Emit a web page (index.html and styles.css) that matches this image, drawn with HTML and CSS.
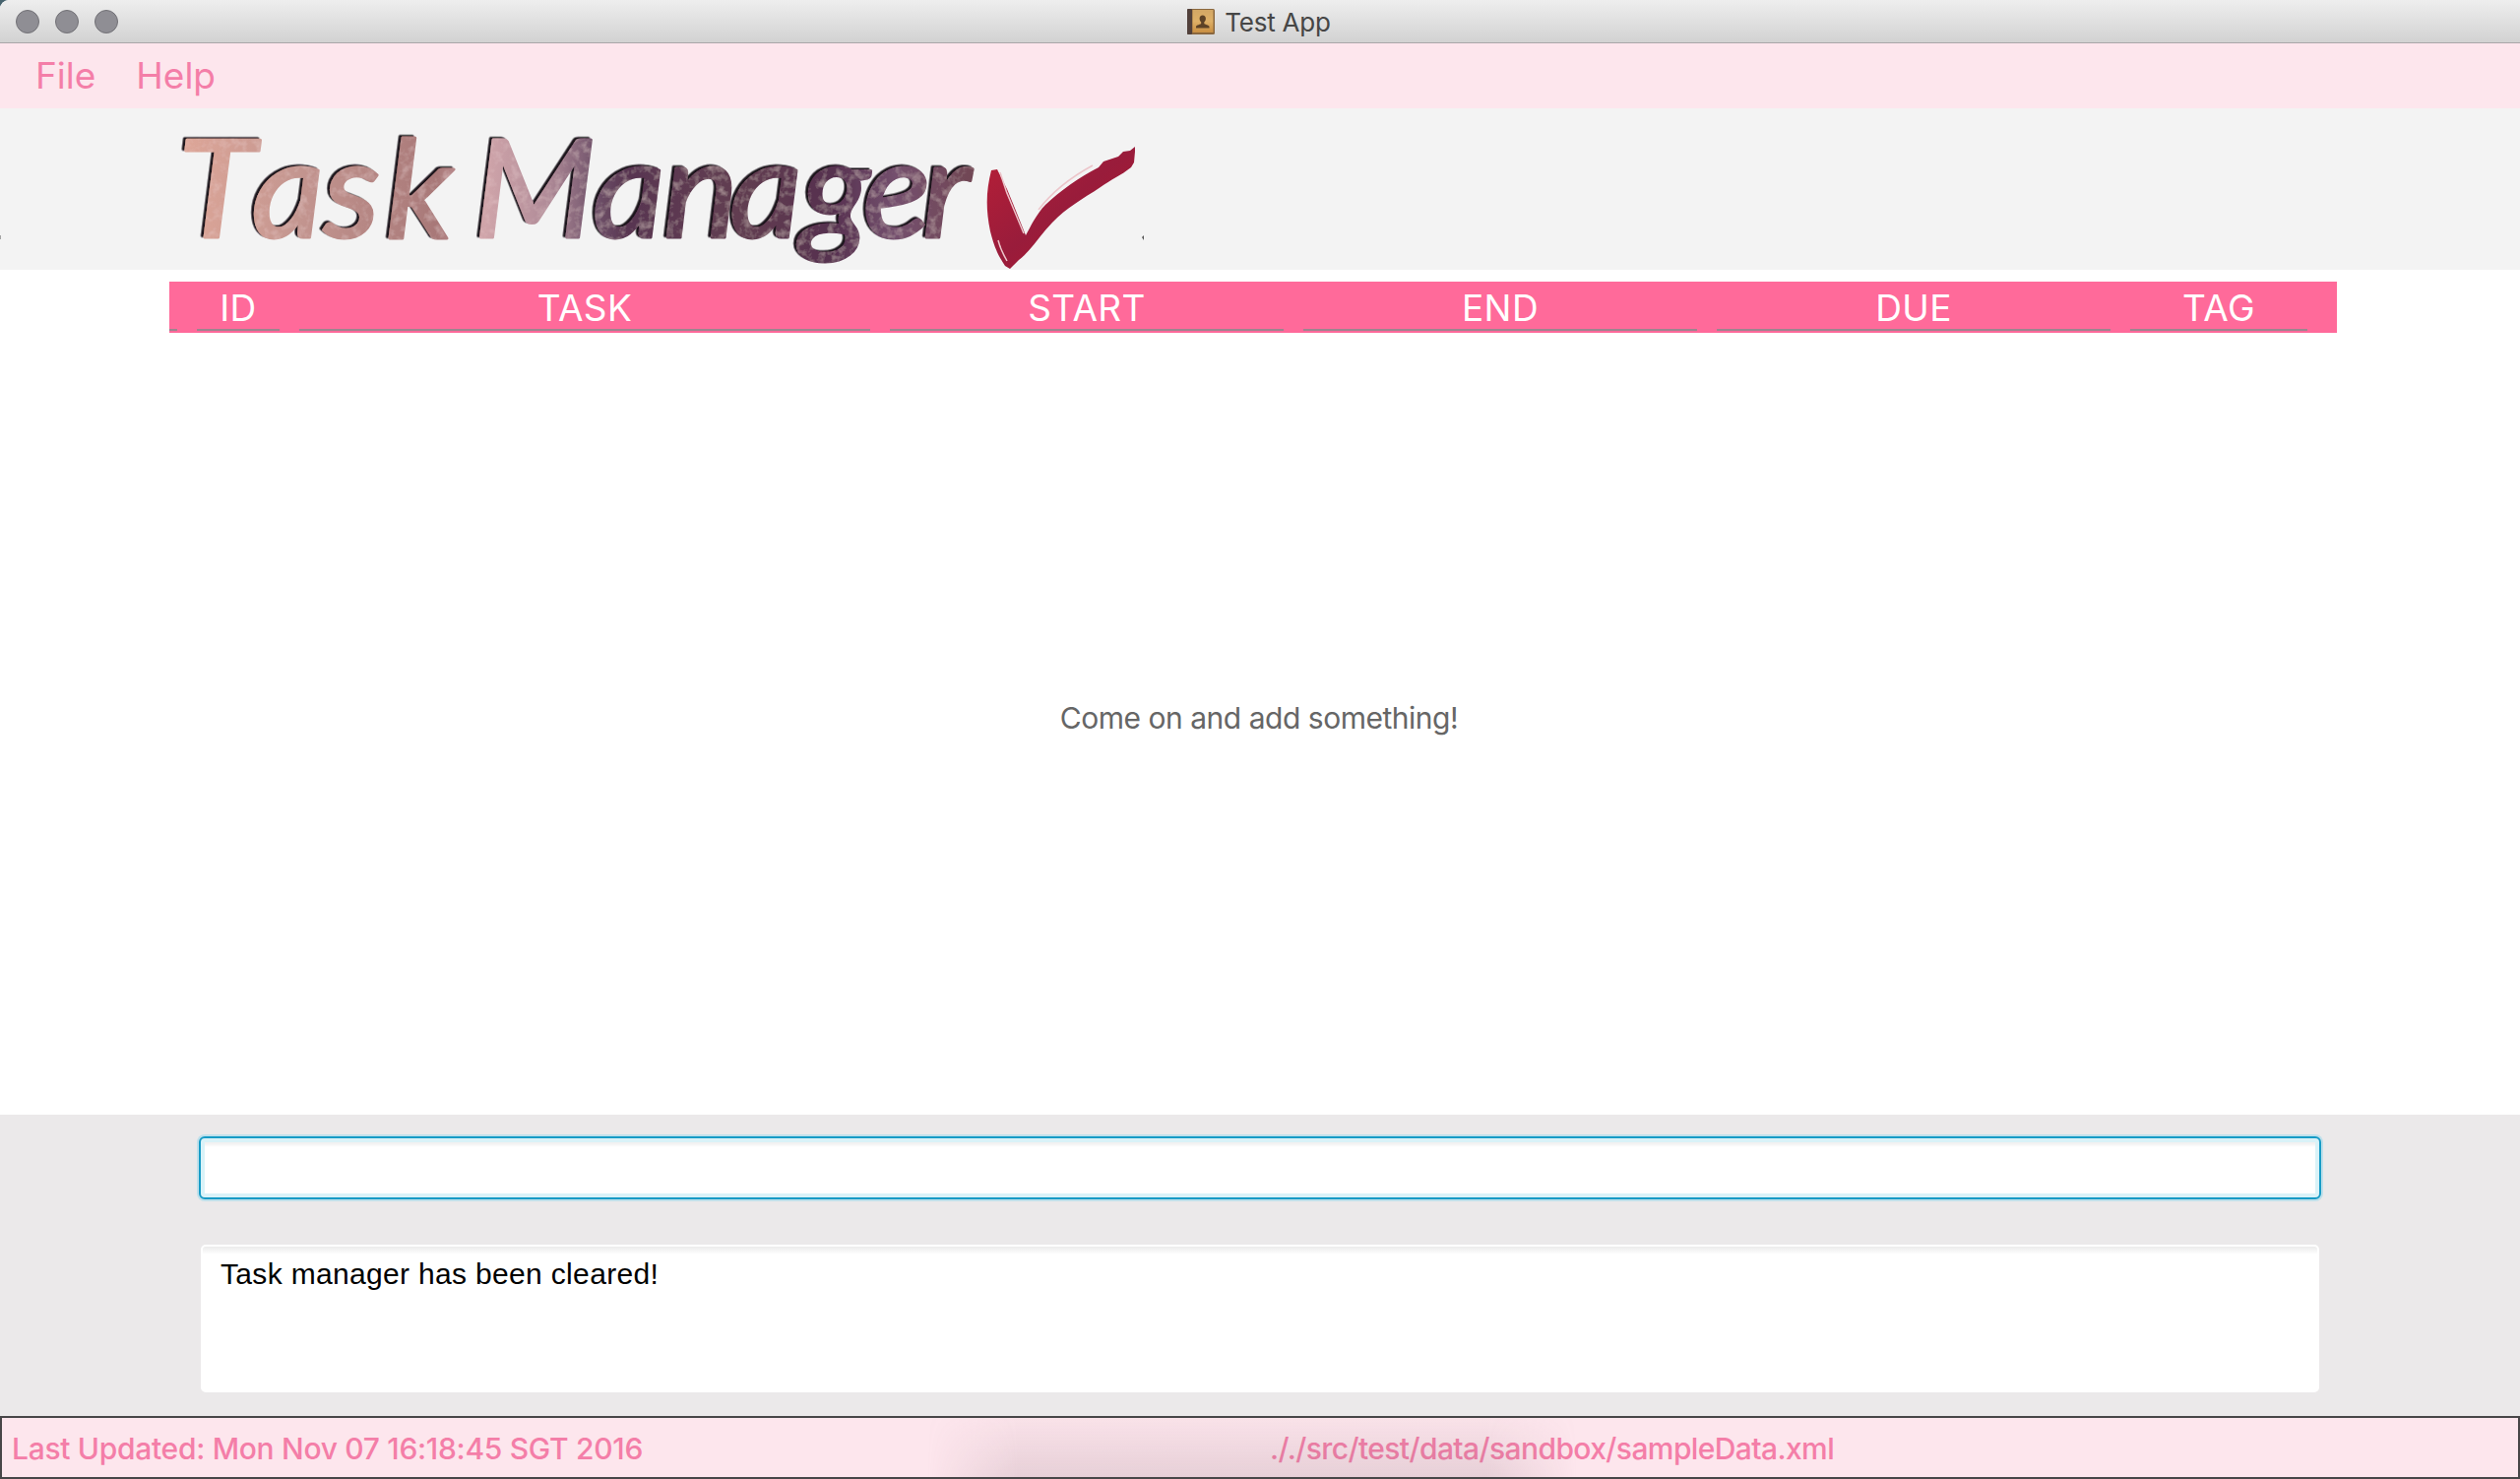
FILE: index.html
```html
<!DOCTYPE html>
<html lang="en">
<head>
<meta charset="utf-8">
<title>Test App</title>
<link rel="stylesheet" href="styles.css">
</head>
<body>
<div class="window">
  <header class="titlebar">
    <div class="lights"><i></i><i></i><i></i></div>
    <div class="title">
      <svg class="book" width="28" height="26" viewBox="0 0 28 26">
        <defs><linearGradient id="cover" x1="0" y1="0" x2="0" y2="1"><stop offset="0" stop-color="#d3a765"/><stop offset=".5" stop-color="#deb067"/><stop offset="1" stop-color="#c98f43"/></linearGradient></defs>
        <rect width="28" height="26" rx="1.5" fill="#8a673e"/>
        <rect width="5" height="26" rx="1" fill="#51403b"/>
        <rect x="5.5" y="1" width="21" height="23" fill="url(#cover)"/>
        <path d="M15.700 6.500c2 0 3.200 1.300 3.200 3.300 0 1.600-.7 2.900-1.600 3.700v1.300c0 1.200 5.200 1.500 5.200 3.300v1.400H9v-1.400c0-1.800 5.200-2.100 5.200-3.300v-1.300c-.9-.8-1.600-2.100-1.600-3.700 0-2 1.100-3.300 3.100-3.300z" fill="#5d4226"/>
      </svg>
      <span>Test App</span>
    </div>
  </header>
  <nav class="menubar"><span class="file">File</span><span class="help">Help</span></nav>
  <section class="banner">
    <svg width="1200" height="164" viewBox="0 110 1200 164">
      <defs>
        <linearGradient id="ink" gradientUnits="userSpaceOnUse" x1="180" y1="0" x2="952" y2="0">
          <stop offset="0" stop-color="#dda698"/><stop offset=".14" stop-color="#c49690"/><stop offset=".32" stop-color="#a87878"/>
          <stop offset=".38" stop-color="#d0a5aa"/><stop offset=".46" stop-color="#b08b98"/><stop offset=".52" stop-color="#70526a"/><stop offset=".56" stop-color="#583551"/>
          <stop offset=".7" stop-color="#623e51"/><stop offset=".82" stop-color="#56304f"/><stop offset=".9" stop-color="#74506e"/><stop offset="1" stop-color="#714653"/>
        </linearGradient>
        <linearGradient id="brush" x1="0" y1="0" x2="1" y2="1"><stop offset="0" stop-color="#b71f37"/><stop offset=".5" stop-color="#991c3b"/><stop offset="1" stop-color="#b0142b"/></linearGradient>
        <filter id="grain" x="-5%" y="-10%" width="110%" height="120%">
          <feTurbulence type="fractalNoise" baseFrequency=".12" numOctaves="3" seed="4" result="n"/>
          <feColorMatrix in="n" type="matrix" values="0 0 0 0 .9  0 0 0 0 .7  0 0 0 0 .7  .7 0 0 0 -.32" result="spots"/>
          <feComposite in="spots" in2="SourceAlpha" operator="in" result="s"/>
          <feMerge result="m"><feMergeNode in="SourceGraphic"/><feMergeNode in="s"/></feMerge>
          <feDropShadow dx="-2.500" dy="-1.500" stdDeviation=".4" flood-color="#1d181c"/>
        </filter>
      </defs>
      <text class="wordmark" transform="scale(1.04 1)" y="241" filter="url(#grain)" x="174 246 316 377 426 463 579 648 713 783 843 901">Task Manager</text>
      <path fill="url(#brush)" d="M1007 173l6-1 10 20 9 22 10 25c5-9 11-22 20-31 15-14 34-28 54-38l5-6 15-5 5-5 7-1 5-4v5l-1 11-3 5c-10 8-20 12-31 20-18 12-35 21-49 36-12 12-20 27-34 38l-5 5-4 4-5-3c-10-15-12-24-15-35-5-24-4-42 1-62z"/>
      <path fill="none" stroke="#ecc5ca" stroke-width="1.500" d="M1016 175c4 14 8 25 14 38l10 24M1014 244c2 8 5 14 9 21M1055 213c13-17 31-32 55-45"/>
      <path fill="#555" d="M1160 241l2-2v5zM0 239h.5v4H0z"/>
    </svg>
  </section>
  <main class="tasks">
    <div class="columns">
      <span class="edge"></span><span>ID</span><span>TASK</span><span>START</span><span>END</span><span>DUE</span><span>TAG</span>
    </div>
    <div class="empty"><p>Come on and add something!</p></div>
  </main>
  <section class="console">
    <input class="command" type="text" aria-label="Command">
    <div class="result">Task manager has been cleared!</div>
  </section>
  <footer class="status"><span class="updated">Last Updated: Mon Nov 07 16:18:45 SGT 2016</span><span class="path">././src/test/data/sandbox/sampleData.xml</span></footer>
</div>
</body>
</html>
```
FILE: styles.css
```css
* { box-sizing: border-box; }
body { margin: 0; background: #47636e; font-family: Inter, "Liberation Sans", sans-serif; }
.window { width: 2560px; height: 1502px; display: flex; flex-direction: column; overflow: hidden; border-radius: 9px 0 0 0; background: #fff; }

.titlebar { height: 44px; flex: none; display: grid; grid-template-columns: 1fr auto 1fr; align-items: center; border-bottom: 1px solid #a9a6a8; background: linear-gradient(#eeeeee, #d2d2d2); }
.lights { display: flex; gap: 16px; padding-left: 16px; }
.lights i { width: 24px; height: 24px; border-radius: 50%; background: #8f8e94; border: 1px solid #727176; }
.title { display: flex; align-items: center; gap: 10px; padding-right: 2px; color: #464646; font-size: 26px; line-height: 30px; letter-spacing: -.2px; }
.title span { padding-top: 2px; }

.menubar { height: 66px; flex: none; display: flex; gap: 41px; padding: 0 36px; line-height: 65px; font-size: 37px; font-weight: 400; letter-spacing: 0; color: #f47ea8; background: #fde6ed; }

.banner { height: 164px; flex: none; background: #f3f3f3; }
.banner svg { display: block; overflow: visible; }
.wordmark { font: italic 400 138px/1 Lato, sans-serif; fill: url(#ink); stroke: url(#ink); stroke-width: 3px; stroke-linejoin: round; }

.tasks { flex: 1; display: flex; flex-direction: column; padding-top: 12px; }
.columns { width: 2202px; height: 52px; flex: none; margin-left: 172px; display: grid; grid-template-columns: 18px 104px 600px 420px 420px 420px 200px; background: #ff6a9a; color: #fff; font-size: 37px; line-height: 53px; letter-spacing: .4px; text-align: center; }
.columns span { height: 50px; margin: 0 10px; border-bottom: 2px solid #9c858f; }
.columns .edge { margin: 0 10px 0 0; }
.empty { flex: 1; padding-top: 373px; text-align: center; }
.empty p { margin: 0 2px 0 0; font-size: 30px; line-height: 36px; font-weight: 400; letter-spacing: -.48px; color: #666; }

.console { height: 306px; flex: none; padding: 22px 202px 24px; display: flex; flex-direction: column; background: #ebe9ea; }
.command { width: 100%; height: 64px; border: 2px solid #179bc6; border-radius: 6px; outline: none; box-shadow: 0 0 0 2px #bfe0eb, inset 0 0 0 4px #d9f2f8, inset 0 7px 3px #f1f1f1; background: #fff; }
.result { height: 150px; margin: 46px 2px 0; padding: 10px 18px; border: 2px solid #fff; border-radius: 5px; background: linear-gradient(#ebebeb, #fff 8px); font: 30px/36px "Liberation Sans", sans-serif; letter-spacing: .33px; color: #000; }

.status { position: relative; height: 64px; flex: none; display: grid; grid-template-columns: 1278px 1fr; border: 2px solid #484648; font-size: 30px; line-height: 63px; font-weight: 500; letter-spacing: -.3px; color: #f47ea8; background: #fde6ed; }
.status::before { content: ""; position: absolute; left: 940px; width: 660px; top: 0; bottom: 0; background: linear-gradient(#8a707b08, #8a707b30); -webkit-mask-image: linear-gradient(90deg, transparent, #000 14%, #000 86%, transparent); mask-image: linear-gradient(90deg, transparent, #000 14%, #000 86%, transparent); }
.updated { padding-left: 10px; }
.path { padding-left: 10px; letter-spacing: -.6px; }
```
